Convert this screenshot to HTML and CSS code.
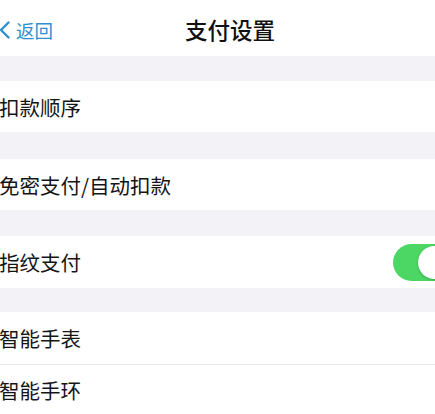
FILE: index.html
```html
<!DOCTYPE html>
<html lang="zh-CN">
<head>
<meta charset="utf-8">
<link rel="stylesheet" href="styles.css">
</head>
<body>
<div class="page">
  <header class="nav">
    <a class="back">
      <svg class="chev" width="12" height="18" viewBox="0 0 12 18"><path d="M9.5 1.5 L2 9 L9.5 16.5" fill="none" stroke="#2f8fd1" stroke-width="2.4" stroke-linecap="round" stroke-linejoin="round"/></svg>
      <span>返回</span>
    </a>
    <h1 class="title">支付设置</h1>
    <span></span>
  </header>
  <div class="gap g1"></div>
  <div class="row r1">扣款顺序</div>
  <div class="gap g2"></div>
  <div class="row r2">免密支付/自动扣款</div>
  <div class="gap g3"></div>
  <div class="row r3">
    <span>指纹支付</span>
    <span class="switch"><span class="knob"></span></span>
  </div>
  <div class="gap g4"></div>
  <div class="row r4">智能手表</div>
  <div class="row r5">智能手环</div>
</div>
</body>
</html>
```
FILE: styles.css
```css
html, body {
  margin: 0;
  padding: 0;
  background: #fff;
}
.page {
  width: 435px;
  height: 414px;
  overflow: hidden;
  font-family: "Noto Sans CJK SC", "Noto Sans", sans-serif;
  color: #151515;
}
.nav {
  height: 56px;
  display: grid;
  grid-template-columns: 1fr auto 1fr;
  align-items: center;
  padding-left: 25px;
  box-sizing: border-box;
}
.back {
  display: flex;
  align-items: center;
  gap: 5px;
  color: #2f8fd1;
  font-size: 18.5px;
  margin-left: -25px;
  margin-top: 3px;
}
.chev { display: block; margin-left: -1px; }
.title {
  margin: 0;
  font-size: 22.5px;
  font-weight: 500;
  color: #111;
  line-height: 1;
  margin-top: 3px;
}
.gap { background: #f3f3f7; }
.g1 { height: 25px; }
.g2 { height: 27px; }
.g3 { height: 26px; }
.g4 { height: 24px; }
.row {
  display: flex;
  align-items: center;
  justify-content: space-between;
  font-size: 20.5px;
  margin-left: -1px;
  background: #fff;
}
.r1 { height: 51px; }
.r2 { height: 51px; }
.r3 { height: 52px; }
.r4 { height: 52px; border-bottom: 1px solid #e8e8ec; }
.r5 { height: 50px; }
.switch {
  width: 60px;
  height: 37px;
  border-radius: 19px;
  background: #4cd764;
  margin-right: -18px;
  display: flex;
  align-items: center;
  justify-content: flex-end;
  padding-right: 2px;
  box-sizing: border-box;
}
.knob {
  width: 33px;
  height: 33px;
  border-radius: 50%;
  background: #fff;
  box-shadow: 0 1px 3px rgba(0,0,0,0.2);
}
```
